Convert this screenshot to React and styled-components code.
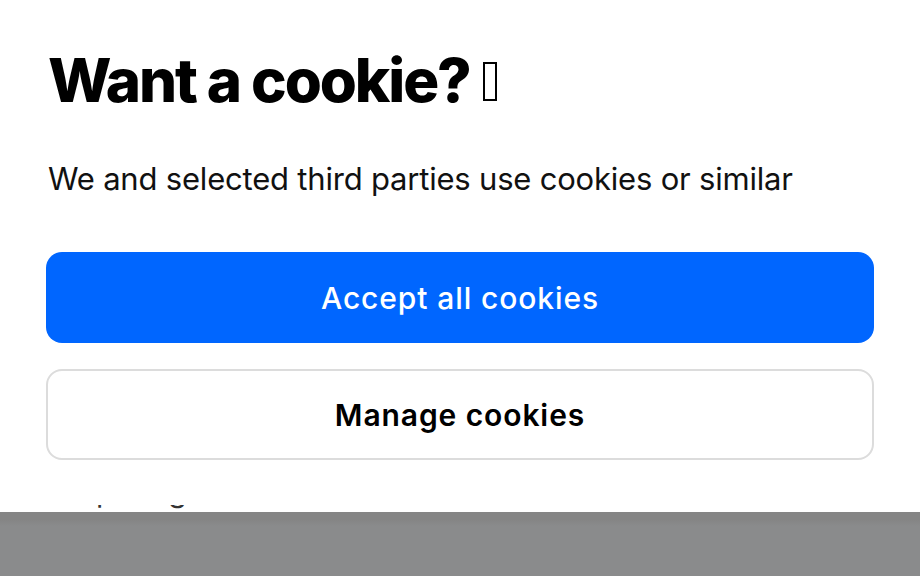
import styled, { createGlobalStyle } from 'styled-components';

const GlobalStyle = createGlobalStyle`
  html, body {
    margin: 0;
    padding: 0;
    background: #8a8b8c;
    overflow: hidden;
  }
  body {
    font-family: Inter, 'Noto Sans', sans-serif;
    -webkit-font-smoothing: antialiased;
  }
`;

const Page = styled.div`
  display: flex;
  flex-direction: column;
  width: 920px;
  height: 576px;
`;

const Sheet = styled.div`
  background: #ffffff;
  height: 512px;
  padding: 0 46px;
  box-sizing: border-box;
  display: flex;
  flex-direction: column;
  overflow: hidden;
`;

const Title = styled.h1`
  display: flex;
  align-items: center;
  margin: 44px 0 0 2px;
  font-size: 60px;
  line-height: 72px;
  font-weight: 800;
  letter-spacing: -0.035em;
  color: #000;
`;

// missing-glyph box for the cookie emoji
const Tofu = styled.span`
  display: inline-block;
  box-sizing: border-box;
  width: 14px;
  height: 39px;
  margin: 2px 0 0 13px;
  border: 2.5px solid #000;
`;

const Lead = styled.p`
  margin: 43px 0 0 2px;
  font-size: 31px;
  line-height: 40px;
  font-weight: 400;
  letter-spacing: -0.2px;
  color: #111;
`;

const Actions = styled.div`
  display: flex;
  flex-direction: column;
  gap: 26px;
  margin-top: 53px;
`;

const Button = styled.button`
  height: 91px;
  border-radius: 16px;
  font-family: Inter, 'Noto Sans', sans-serif;
  font-size: 30px;
  font-weight: ${p => (p.$primary ? 500 : 600)};
  letter-spacing: 0.9px;
  color: ${p => (p.$primary ? '#ffffff' : '#000000')};
  background: ${p => (p.$primary ? '#0066ff' : '#ffffff')};
  border: ${p => (p.$primary ? 'none' : '2px solid #dcdcdc')};
  cursor: pointer;
`;

// the next paragraph, scrolled almost out of view: only descenders show
const Peek = styled.div`
  margin-top: auto;
  height: 7px;
  overflow: hidden;
`;

const PeekText = styled.div`
  margin-top: -31px;
  padding-left: 50px;
  font-size: 30px;
  line-height: 34px;
  color: #333;
  white-space: nowrap;
`;

const Dim = styled.div`
  flex: 1;
  background: linear-gradient(#858585 0, #858585 8px, #8a8b8c 14px);
`;

export default function App() {
  return (
    <Page>
      <GlobalStyle />
      <Sheet>
        <Title>
          Want a cookie?<Tofu aria-label="cookie" />
        </Title>
        <Lead>We and selected third parties use cookies or similar</Lead>
        <Actions>
          <Button $primary>Accept all cookies</Button>
          <Button>Manage cookies</Button>
        </Actions>
        <Peek>
          <PeekText>paring</PeekText>
        </Peek>
      </Sheet>
      <Dim />
    </Page>
  );
}
